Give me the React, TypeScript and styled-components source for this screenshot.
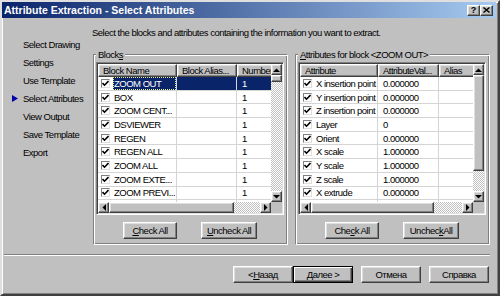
import React from 'react';
import styled, { createGlobalStyle, css } from 'styled-components';

const FONT = '"Liberation Sans", Arial, sans-serif';
const FACE = '#c0c0c0';

type Column = {
  title: string;
  width: number;
};

const blockColumns: Column[] = [
  { title: 'Block Name', width: 79 },
  { title: 'Block Alias...', width: 60 },
  { title: 'Number', width: 50 },
];

const blockRows = [
  ['ZOOM OUT', '', '1'],
  ['BOX', '', '1'],
  ['ZOOM CENT...', '', '1'],
  ['DSVIEWER', '', '1'],
  ['REGEN', '', '1'],
  ['REGEN ALL', '', '1'],
  ['ZOOM ALL', '', '1'],
  ['ZOOM EXTE...', '', '1'],
  ['ZOOM PREVI...', '', '1'],
  ['ZOOM WIN...', '', '1'],
];

const attrColumns: Column[] = [
  { title: 'Attribute', width: 78 },
  { title: 'AttributeVal...', width: 61 },
  { title: 'Alias', width: 45 },
];

const attrRows = [
  ['X insertion point', '0.000000', ''],
  ['Y insertion point', '0.000000', ''],
  ['Z insertion point', '0.000000', ''],
  ['Layer', '0', ''],
  ['Orient', '0.000000', ''],
  ['X scale', '1.000000', ''],
  ['Y scale', '1.000000', ''],
  ['Z scale', '1.000000', ''],
  ['X extrude', '0.000000', ''],
  ['Y extrude', '0.000000', ''],
];

const steps = [
  'Select Drawing',
  'Settings',
  'Use Template',
  'Select Attributes',
  'View Output',
  'Save Template',
  'Export',
];

const GlobalStyle = createGlobalStyle`
  html, body {
    margin: 0;
    padding: 0;
    background: ${FACE};
  }
  body {
    font-family: ${FONT};
    font-size: 9.5px;
    letter-spacing: -0.5px;
    color: #000;
  }
  * {
    box-sizing: border-box;
  }
`;

const raised = css`
  background: ${FACE};
  border: 1px solid;
  border-color: #fff #404040 #404040 #fff;
  box-shadow: inset -1px -1px 0 #808080, inset 1px 1px 0 #dfdfdf;
`;

const ArrowIcon = ({ dir }: { dir: 'up' | 'down' | 'left' | 'right' }) => {
  const vertical = dir === 'up' || dir === 'down';
  const points = {
    up: '0,4 3.5,0.5 7,4',
    down: '0,0 3.5,3.5 7,0',
    left: '4,0 0.5,3.5 4,7',
    right: '0,0 3.5,3.5 0,7',
  }[dir];
  return (
    <svg width={vertical ? 7 : 4} height={vertical ? 4 : 7} viewBox={vertical ? '0 0 7 4' : '0 0 4 7'}>
      <polygon points={points} fill="#000" />
    </svg>
  );
};

const ScrollBar = ({ dir, thumb }: { dir: 'v' | 'h'; thumb: number }) => (
  <Bar $dir={dir}>
    <ArrowButton>
      <ArrowIcon dir={dir === 'v' ? 'up' : 'left'} />
    </ArrowButton>
    <Thumb $size={thumb} />
    <Track />
    <ArrowButton>
      <ArrowIcon dir={dir === 'v' ? 'down' : 'right'} />
    </ArrowButton>
  </Bar>
);

const ListView = ({
  columns,
  rows,
  selected,
  vThumb,
  hThumb,
}: {
  columns: Column[];
  rows: string[][];
  selected?: number;
  vThumb: number;
  hThumb: number;
}) => (
  <ListFrame>
    <Viewport>
      <HeaderRow>
        {columns.map(c => (
          <HeaderCell key={c.title} $w={c.width}>
            {c.title}
          </HeaderCell>
        ))}
      </HeaderRow>
      {rows.map((r, i) => {
        const sel = i === selected;
        return (
          <Row key={r[0]}>
            <FirstCell $w={columns[0].width}>
              <CheckBox>
                <svg width="7" height="7" viewBox="0 0 7 7">
                  <polyline points="0.5,3 2.5,5.2 6.5,1" fill="none" stroke="#000" strokeWidth="1.6" />
                </svg>
              </CheckBox>
              <Label $selected={sel}>{r[0]}</Label>
            </FirstCell>
            {r.slice(1).map((v, j) => (
              <Cell key={j} $w={columns[j + 1].width} $selected={sel}>
                {v}
              </Cell>
            ))}
          </Row>
        );
      })}
    </Viewport>
    <ScrollBar dir="v" thumb={vThumb} />
    <ScrollBar dir="h" thumb={hThumb} />
    <Corner />
  </ListFrame>
);

export default function App() {
  return (
    <>
      <GlobalStyle />
      <Window>
        <TitleBar>
          <span>Attribute Extraction - Select Attributes</span>
          <TitleButtons>
            <TitleButton>?</TitleButton>
            <TitleButton>
              <svg width="7" height="6" viewBox="0 0 7 6">
                <path d="M0.5 0.5 L6.5 5.5 M6.5 0.5 L0.5 5.5" stroke="#000" strokeWidth="1.4" />
              </svg>
            </TitleButton>
          </TitleButtons>
        </TitleBar>
        <Body>
          <Nav>
            {steps.map(s => (
              <NavItem key={s}>
                <Marker>
                  {s === 'Select Attributes' && (
                    <svg width="6" height="7" viewBox="0 0 6 7">
                      <polygon points="0,0 6,3.5 0,7" fill="#0000a8" />
                    </svg>
                  )}
                </Marker>
                {s}
              </NavItem>
            ))}
          </Nav>
          <Main>
            <Description>
              Select the blocks and attributes containing the information you want to extract.
            </Description>
            <Panels>
              <GroupBox $w={195}>
                <Legend>
                  Block<u>s</u>
                </Legend>
                <ListView columns={blockColumns} rows={blockRows} selected={0} vThumb={7} hThumb={125} />
                <GroupButtons>
                  <Button $w={54}>
                    <u>C</u>heck All
                  </Button>
                  <Button $w={56}>
                    <u>U</u>ncheck All
                  </Button>
                </GroupButtons>
              </GroupBox>
              <GroupBox $w={195}>
                <Legend>
                  <u>A</u>ttributes for block &lt;ZOOM OUT&gt;
                </Legend>
                <ListView columns={attrColumns} rows={attrRows} vThumb={96} hThumb={123} />
                <GroupButtons>
                  <Button $w={54}>
                    Che<u>c</u>k All
                  </Button>
                  <Button $w={56}>
                    Unchec<u>k</u> All
                  </Button>
                </GroupButtons>
              </GroupBox>
            </Panels>
          </Main>
        </Body>
        <Separator />
        <ButtonRow>
          <Button $w={60}>
            &lt; <u>Н</u>азад
          </Button>
          <Button $w={60} $default>
            Далее &gt;
          </Button>
          <Button $w={60} $gap={8}>
            Отмена
          </Button>
          <Button $w={60} $gap={8}>
            Справка
          </Button>
        </ButtonRow>
      </Window>
    </>
  );
}

const Window = styled.div`
  width: 500px;
  height: 296px;
  display: flex;
  flex-direction: column;
  background: ${FACE};
  border: 2px solid;
  border-color: #dfdfdf #404040 #404040 #dfdfdf;
  box-shadow: inset 1px 1px 0 #fff, inset -1px -1px 0 #808080;
  padding: 0 2px 0 0;
  overflow: hidden;
`;

const TitleBar = styled.div`
  height: 16px;
  flex: 0 0 16px;
  display: flex;
  align-items: center;
  justify-content: space-between;
  padding: 0 3px 0 2px;
  background: linear-gradient(to right, #0a246a, #a6caf0);
  color: #fff;
  font-weight: bold;
  font-size: 10.5px;
  letter-spacing: 0;
  white-space: nowrap;
`;

const TitleButtons = styled.div`
  display: flex;
`;

const TitleButton = styled.div`
  ${raised};
  width: 13px;
  height: 11px;
  display: flex;
  align-items: center;
  justify-content: center;
  color: #000;
  font-size: 9px;
  font-weight: bold;
  line-height: 1;
`;

const Body = styled.div`
  display: flex;
`;

const Nav = styled.div`
  width: 90px;
  flex: 0 0 90px;
  padding-top: 17px;
`;

const NavItem = styled.div`
  height: 18px;
  display: flex;
  align-items: center;
  white-space: nowrap;
`;

const Marker = styled.div`
  width: 21px;
  flex: 0 0 21px;
  padding-left: 10px;
  display: flex;
  align-items: center;
`;

const Main = styled.div`
  flex: 1;
  padding-top: 9px;
`;

const Description = styled.div`
  line-height: 11px;
  white-space: nowrap;
`;

const Panels = styled.div`
  display: flex;
  gap: 7px;
  margin-top: 11px;
  padding-left: 1px;
`;

const GroupBox = styled.fieldset<{ $w: number }>`
  width: ${p => p.$w}px;
  height: 196px;
  margin: 0;
  min-width: 0;
  padding: 2px 3px 0 2px;
  border: 1px solid;
  border-color: #808080 #fff #fff #808080;
  box-shadow: inset 1px 1px 0 #fff, inset -1px -1px 0 #808080;
  display: flex;
  flex-direction: column;
`;

const Legend = styled.legend`
  padding: 0 2px;
  margin-left: 0;
  line-height: 11px;
  background: ${FACE};
  white-space: nowrap;
`;

const ListFrame = styled.div`
  height: 153px;
  flex: 0 0 153px;
  display: grid;
  grid-template-columns: minmax(0, 1fr) 11px;
  grid-template-rows: minmax(0, 1fr) 11px;
  border: 1px solid;
  border-color: #808080 #fff #fff #808080;
  box-shadow: inset 1px 1px 0 #404040, inset -1px -1px 0 #dfdfdf;
  padding: 1px;
  background: #fff;
`;

const Viewport = styled.div`
  grid-area: 1 / 1;
  overflow: hidden;
  background: #fff;
`;

const HeaderRow = styled.div`
  display: flex;
  height: 13px;
`;

const HeaderCell = styled.div<{ $w: number }>`
  ${raised};
  flex: 0 0 ${p => p.$w}px;
  height: 13px;
  padding-left: 4px;
  line-height: 11px;
  white-space: nowrap;
  overflow: hidden;
`;

const Row = styled.div`
  display: flex;
  height: 13.7px;
  border-bottom: 1px solid #d4d4d4;
`;

const Cell = styled.div<{ $w: number; $selected?: boolean }>`
  flex: 0 0 ${p => p.$w}px;
  display: flex;
  align-items: center;
  padding-left: 5px;
  border-right: 1px solid #d4d4d4;
  white-space: nowrap;
  overflow: hidden;
  background: ${p => (p.$selected ? '#0a246a' : 'transparent')};
  color: ${p => (p.$selected ? '#fff' : '#000')};
`;

const FirstCell = styled.div<{ $w: number }>`
  flex: 0 0 ${p => p.$w}px;
  display: flex;
  align-items: center;
  padding-left: 3px;
  border-right: 1px solid #d4d4d4;
  white-space: nowrap;
  overflow: hidden;
`;

const CheckBox = styled.div`
  width: 9px;
  height: 9px;
  flex: 0 0 9px;
  border: 1px solid;
  border-color: #808080 #dfdfdf #dfdfdf #808080;
  background: #fff;
  display: flex;
  align-items: center;
  justify-content: center;
`;

const Label = styled.div<{ $selected?: boolean }>`
  flex: 1;
  align-self: stretch;
  display: flex;
  align-items: center;
  margin-left: 3px;
  padding-left: 1px;
  background: ${p => (p.$selected ? '#0a246a' : 'transparent')};
  color: ${p => (p.$selected ? '#fff' : '#000')};
  outline: ${p => (p.$selected ? '1px dotted #e8e890' : 'none')};
  outline-offset: -1px;
`;

const Bar = styled.div<{ $dir: 'v' | 'h' }>`
  grid-area: ${p => (p.$dir === 'v' ? '1 / 2' : '2 / 1')};
  display: flex;
  flex-direction: ${p => (p.$dir === 'v' ? 'column' : 'row')};
  min-width: 0;
  min-height: 0;
`;

const ArrowButton = styled.div`
  ${raised};
  width: 11px;
  height: 11px;
  flex: 0 0 11px;
  display: flex;
  align-items: center;
  justify-content: center;
`;

const Thumb = styled.div<{ $size: number }>`
  ${raised};
  flex: 0 0 ${p => p.$size}px;
`;

const Track = styled.div`
  flex: 1;
  background: repeating-conic-gradient(#fff 0% 25%, ${FACE} 0% 50%) 0 0 / 2px 2px;
`;

const Corner = styled.div`
  grid-area: 2 / 2;
  background: ${FACE};
`;

const GroupButtons = styled.div`
  display: flex;
  justify-content: center;
  gap: 24px;
  margin-top: 7px;
`;

const Button = styled.div<{ $w: number; $default?: boolean; $gap?: number }>`
  ${raised};
  width: ${p => p.$w}px;
  height: 17px;
  margin-left: ${p => p.$gap ?? 0}px;
  display: flex;
  align-items: center;
  justify-content: center;
  white-space: nowrap;
  ${p =>
    p.$default &&
    css`
      border-color: #000;
      box-shadow: inset 1px 1px 0 #fff, inset -1px -1px 0 #404040, inset -2px -2px 0 #808080;
    `}
`;

const Separator = styled.div`
  height: 2px;
  margin: 9px 6px 0 2px;
  border-top: 1px solid #808080;
  border-bottom: 1px solid #fff;
`;

const ButtonRow = styled.div`
  display: flex;
  justify-content: flex-end;
  margin-top: 10px;
  padding-right: 7px;
`;
